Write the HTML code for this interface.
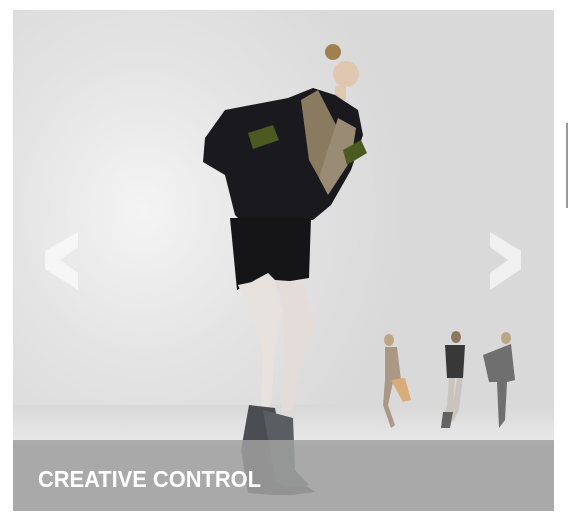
<!DOCTYPE html>
<html><head><style>
html,body{margin:0;padding:0;background:#fff;width:569px;height:526px;overflow:hidden;position:relative}
.frame{position:absolute;left:13px;top:10px;width:541px;height:501px;overflow:hidden;
background:radial-gradient(ellipse 260px 300px at 130px 200px,#f4f4f4 0%,#e4e4e4 50%,#d9d9d9 100%);}
.floor{position:absolute;left:0;top:395px;width:541px;height:40px;background:linear-gradient(#d8d8d8,#e9e9e9)}
.cap{position:absolute;left:0;top:430px;width:541px;height:71px;background:rgba(160,160,160,0.85)}
.cap span{position:absolute;left:25px;top:26px;font:bold 23px "Liberation Sans",sans-serif;color:#fff;transform:scaleX(0.95);transform-origin:left}
.side{position:absolute;left:566px;top:123px;width:2px;height:85px;background:#999}
</style></head><body>
<div class="frame">
<div class="floor"></div>
<svg width="541" height="501" style="position:absolute;left:0;top:0">
<polygon points="65,222 32,241 32,259 65,280 65,263 47,250 65,237" fill="#fff" opacity="0.6"/>
<polygon points="477,222 508,241 508,259 477,280 477,263 495,250 477,237" fill="#fff" opacity="0.6"/>
<g opacity="0.8">
<ellipse cx="376" cy="330" rx="5" ry="6" fill="#b89a70"/>
<path d="M372 337 L384 337 L388 370 L380 372 L375 395 L382 415 L378 418 L370 395 L372 370 Z" fill="#a08870"/>
<path d="M378 370 L392 368 L398 390 L390 392 Z" fill="#d8a060"/>
<ellipse cx="443" cy="327" rx="5" ry="6" fill="#7a6040"/>
<path d="M432 335 L452 335 L450 368 L434 368 Z" fill="#111"/>
<path d="M436 368 L442 368 L440 400 L432 415 L428 412 L434 395 Z" fill="#c8c0b8"/>
<path d="M444 368 L450 368 L446 400 L440 412 L438 408 Z" fill="#c8c0b8"/>
<path d="M430 402 L440 402 L437 418 L428 418 Z" fill="#444"/>
<ellipse cx="493" cy="328" rx="5" ry="6" fill="#b89a70"/>
<path d="M470 345 L498 334 L502 370 L494 372 L492 410 L486 418 L484 372 L476 372 Z" fill="#555"/>
</g>
<circle cx="333" cy="64" r="13" fill="#e0c8b0"/>
<circle cx="320" cy="42" r="8" fill="#a08050"/>
<rect x="322" y="76" width="11" height="14" fill="#e0c8b0"/>
<path d="M275 88 L300 78 L322 85 L345 100 L350 125 L338 160 L318 195 L300 210 L232 215 L222 205 L212 165 L190 152 L192 128 L212 100 Z" fill="#1a1a1e"/>
<path d="M305 80 L323 115 L310 175 L296 150 L288 90 Z" fill="#8a7a60"/>
<path d="M325 108 L343 118 L338 150 L315 185 L306 168 Z" fill="#9a8c74"/>
<path d="M235 123 L260 115 L266 130 L240 139 Z" fill="#4a5a20"/>
<path d="M330 140 L348 130 L354 143 L334 155 Z" fill="#4a5a20"/>
<path d="M217 208 L298 208 L296 268 L265 273 L255 263 L224 280 Z" fill="#151518"/>
<path d="M225 275 L258 268 L268 300 L262 340 L258 395 L248 400 L250 345 L240 310 Z" fill="#e8e2de"/>
<path d="M262 270 L290 272 L303 320 L285 360 L280 400 L268 402 L272 355 L270 300 Z" fill="#e4dcd8"/>
<path d="M236 395 L262 398 L268 430 L272 470 L292 475 L302 482 L280 485 L260 485 L235 483 L228 440 Z" fill="#4a4e52"/>
<path d="M250 400 L280 408 L282 460 L296 475 L275 478 L262 470 Z" fill="#5a5e62"/>
</svg>
<div class="cap"><span>CREATIVE CONTROL</span></div>
</div>
<div class="side"></div>
</body></html>
